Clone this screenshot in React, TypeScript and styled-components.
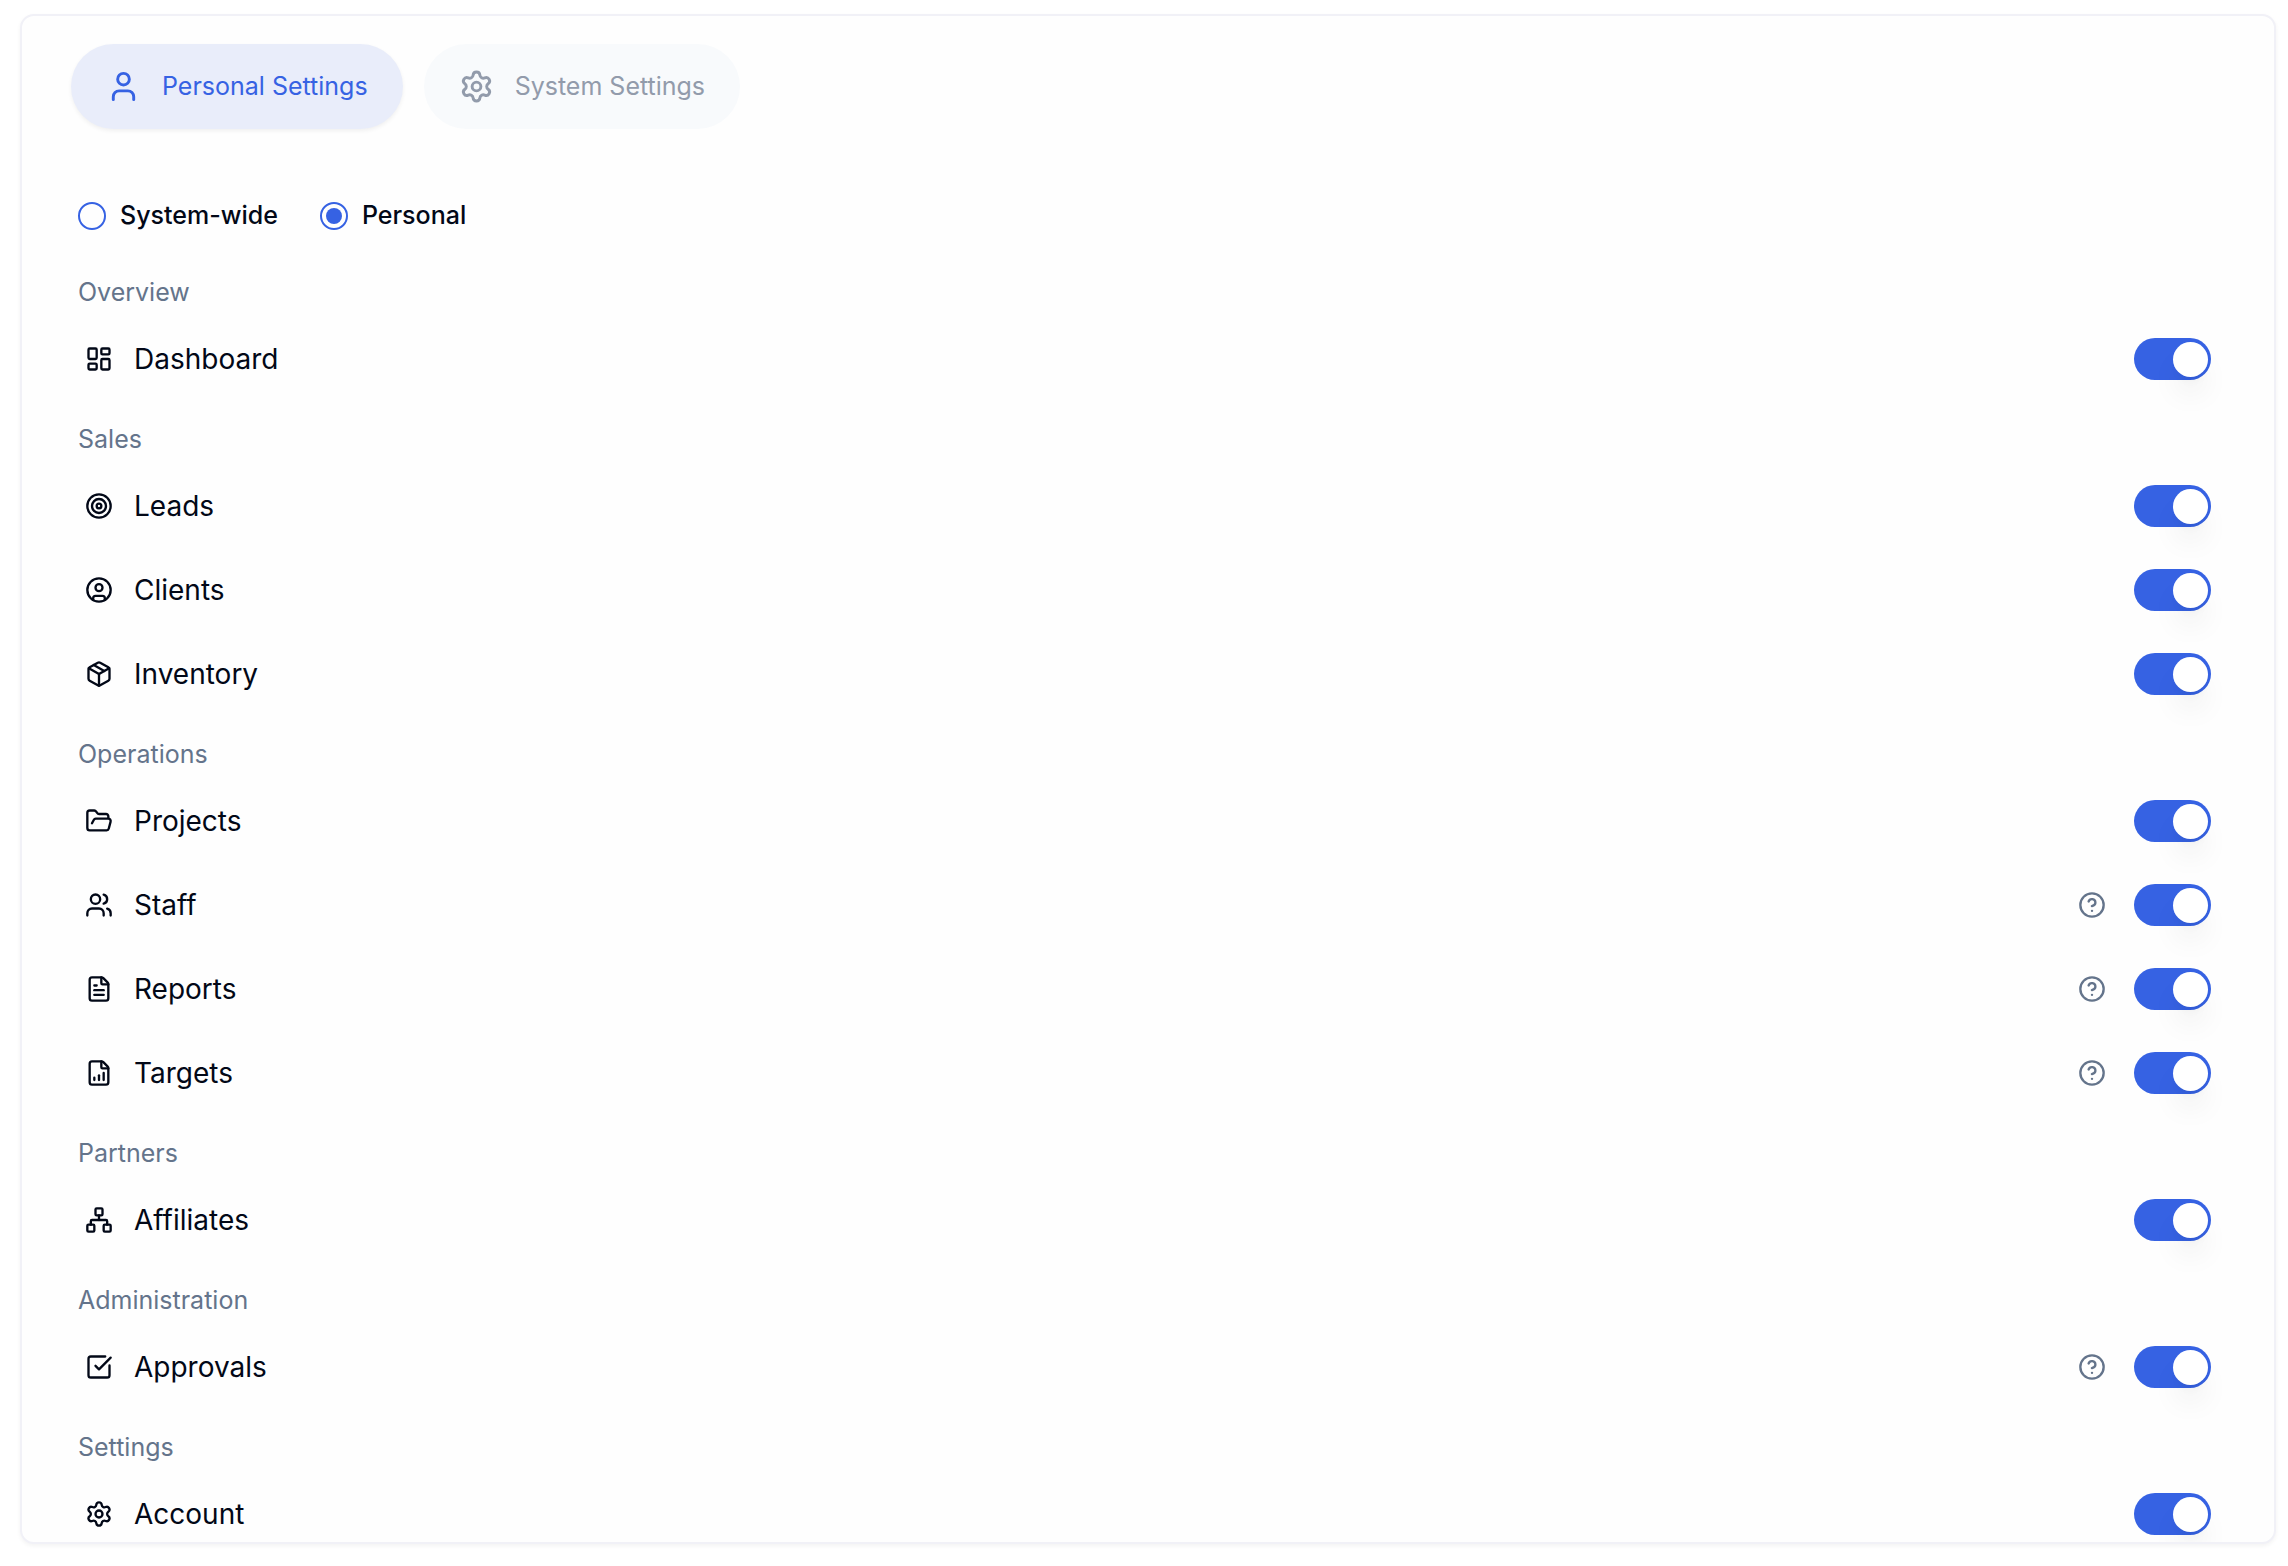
import { useState } from "react";
import styled, { createGlobalStyle, css } from "styled-components";
import {
  CircleHelp,
  CircleUser,
  FileChartColumnIncreasing,
  FileText,
  FolderOpen,
  LayoutDashboard,
  Network,
  Package,
  Settings,
  SquareCheckBig,
  Target,
  User,
  Users,
  type LucideIcon,
} from "lucide-react";

const color = {
  primary: "#3662e3",
  primarySoft: "#e9edfa",
  foreground: "#020817",
  muted: "#64748b",
  mutedSoft: "#929bab",
  surface: "#fefefe",
  tab: "#f8fafc",
  border: "#f1f1f7",
};

const GlobalStyle = createGlobalStyle`
  *, *::before, *::after { box-sizing: border-box; }
  body {
    margin: 0;
    background: #ffffff;
    color: ${color.foreground};
    font-family: Inter, "Noto Sans", sans-serif;
    font-size: 28px;
    line-height: 42px;
  }
`;

const Page = styled.main`
  padding: 14px 12px 22px 20px;
`;

const Card = styled.div`
  display: flex;
  flex-direction: column;
  gap: 69px;
  padding: 28px 49px 0;
  overflow: hidden;
  background: ${color.surface};
  border: 2px solid ${color.border};
  border-radius: 14px;
  box-shadow: 0 2px 4px rgba(0, 0, 0, 0.05);
`;

const TabList = styled.nav`
  display: flex;
  gap: 21px;
`;

const Tab = styled.button<{ $active: boolean }>`
  display: flex;
  align-items: center;
  gap: 21px;
  padding: 25px 35px;
  border: 0;
  border-radius: 999px;
  background: ${color.tab};
  color: ${color.mutedSoft};
  font: inherit;
  font-size: 25px;
  line-height: 35px;
  cursor: pointer;
  ${(p) =>
    p.$active &&
    css`
      background: ${color.primarySoft};
      color: ${color.primary};
      box-shadow: 0 2px 4px rgba(0, 0, 0, 0.06);
    `}
`;

const Form = styled.form`
  display: flex;
  flex-direction: column;
  gap: 42px;
  padding: 0 7px;
`;

const RadioGroup = styled.fieldset`
  display: flex;
  gap: 42px;
  margin: 0;
  padding: 0;
  border: 0;
`;

const RadioLabel = styled.label`
  display: flex;
  align-items: center;
  gap: 14px;
  font-size: 25px;
  font-weight: 500;
  line-height: 35px;
  cursor: pointer;
`;

const Radio = styled.input.attrs({ type: "radio" })`
  appearance: none;
  display: grid;
  place-items: center;
  width: 28px;
  height: 28px;
  margin: 0;
  border: 2px solid ${color.primary};
  border-radius: 50%;
  cursor: pointer;

  &:checked::before {
    content: "";
    width: 16px;
    height: 16px;
    border-radius: 50%;
    background: ${color.primary};
  }
`;

const Groups = styled.div`
  display: flex;
  flex-direction: column;
  gap: 35px;
`;

const Group = styled.section`
  display: flex;
  flex-direction: column;
  gap: 21px;
`;

const GroupTitle = styled.h2`
  margin: 0;
  color: ${color.muted};
  font-size: 25px;
  font-weight: 400;
  line-height: 35px;
`;

const Rows = styled.div`
  display: flex;
  flex-direction: column;
  gap: 28px;
`;

const Row = styled.div`
  display: flex;
  align-items: center;
  gap: 28px;
  height: 56px;
  padding: 0 7px;
`;

const RowLabel = styled.label`
  display: flex;
  flex: 1;
  align-items: center;
  gap: 21px;
`;

const HelpButton = styled.button`
  display: flex;
  padding: 0;
  border: 0;
  background: none;
  color: ${color.muted};
  cursor: pointer;
`;

const Switch = styled.input.attrs({ type: "checkbox", role: "switch" })`
  appearance: none;
  display: flex;
  align-items: center;
  width: 77px;
  height: 42px;
  margin: 0;
  padding: 0 3px;
  border-radius: 21px;
  background: #e2e8f0;
  cursor: pointer;

  &::before {
    content: "";
    width: 35px;
    height: 35px;
    border-radius: 50%;
    background: #ffffff;
    box-shadow: 0 20px 30px -6px rgba(0, 0, 0, 0.1), 0 8px 12px -8px rgba(0, 0, 0, 0.1);
  }

  &:checked {
    justify-content: flex-end;
    background: ${color.primary};
  }
`;

type Item = { label: string; icon: LucideIcon; help?: boolean };

const groups: { title: string; items: Item[] }[] = [
  { title: "Overview", items: [{ label: "Dashboard", icon: LayoutDashboard }] },
  {
    title: "Sales",
    items: [
      { label: "Leads", icon: Target },
      { label: "Clients", icon: CircleUser },
      { label: "Inventory", icon: Package },
    ],
  },
  {
    title: "Operations",
    items: [
      { label: "Projects", icon: FolderOpen },
      { label: "Staff", icon: Users, help: true },
      { label: "Reports", icon: FileText, help: true },
      { label: "Targets", icon: FileChartColumnIncreasing, help: true },
    ],
  },
  { title: "Partners", items: [{ label: "Affiliates", icon: Network }] },
  { title: "Administration", items: [{ label: "Approvals", icon: SquareCheckBig, help: true }] },
  { title: "Settings", items: [{ label: "Account", icon: Settings }] },
];

const tabs = [
  { label: "Personal Settings", icon: User },
  { label: "System Settings", icon: Settings },
];

const scopes = ["System-wide", "Personal"];

function SettingRow({ label, icon: Icon, help }: Item) {
  const [on, setOn] = useState(true);
  const id = `module-${label.toLowerCase()}`;
  return (
    <Row>
      <RowLabel htmlFor={id}>
        <Icon size={28} />
        {label}
      </RowLabel>
      {help && (
        <HelpButton type="button" aria-label={`About ${label}`}>
          <CircleHelp size={28} />
        </HelpButton>
      )}
      <Switch id={id} checked={on} onChange={() => setOn(!on)} />
    </Row>
  );
}

export default function App() {
  const [tab, setTab] = useState(tabs[0].label);
  const [scope, setScope] = useState("Personal");
  return (
    <Page>
      <GlobalStyle />
      <Card>
        <TabList>
          {tabs.map(({ label, icon: Icon }) => (
            <Tab key={label} type="button" $active={tab === label} onClick={() => setTab(label)}>
              <Icon size={35} />
              {label}
            </Tab>
          ))}
        </TabList>
        <Form>
          <RadioGroup>
            {scopes.map((name) => (
              <RadioLabel key={name}>
                <Radio name="scope" checked={scope === name} onChange={() => setScope(name)} />
                {name}
              </RadioLabel>
            ))}
          </RadioGroup>
          <Groups>
            {groups.map(({ title, items }) => (
              <Group key={title}>
                <GroupTitle>{title}</GroupTitle>
                <Rows>
                  {items.map((item) => (
                    <SettingRow key={item.label} {...item} />
                  ))}
                </Rows>
              </Group>
            ))}
          </Groups>
        </Form>
      </Card>
    </Page>
  );
}
